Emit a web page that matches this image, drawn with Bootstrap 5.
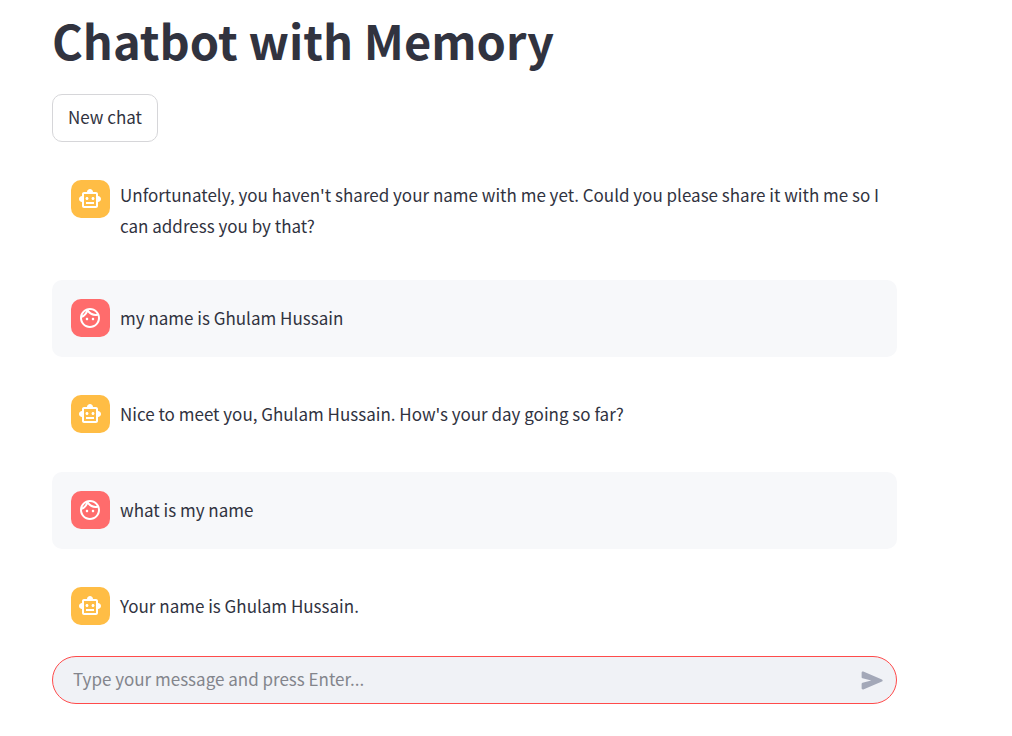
<!DOCTYPE html>
<html lang="en">
<head>
<meta charset="utf-8">
<meta name="viewport" content="width=device-width, initial-scale=1">
<title>Chatbot with Memory</title>
<link href="https://cdn.jsdelivr.net/npm/bootstrap@5.3.0/dist/css/bootstrap.min.css" rel="stylesheet">
<style>
  body { font-family: "Noto Sans CJK SC", "Noto Sans", sans-serif; font-size: 17px; line-height: 31px; color: #31333f; }
  .chat-page { padding: 9px 115px 32px 52px; }
  .chat-title { margin-bottom: 23px; font-size: 47px; line-height: 62px; color: #31333f; }
  .btn-new { --bs-btn-font-size: 17px; --bs-btn-line-height: 30px; --bs-btn-padding-x: 15px;
    --bs-btn-color: #31333f; --bs-btn-border-color: #d6d6d9; --bs-btn-border-radius: 10px; --bs-btn-bg: #fff;
    --bs-btn-hover-color: #ff4b4b; --bs-btn-hover-border-color: #ff4b4b; padding-top: 7px; padding-bottom: 9px; }
  .chat-log { gap: 19px; margin-top: 19px; }
  .message { gap: 10px; min-height: 77px; padding: 18px 9px 20px 19px; border-radius: 10px; }
  .message.user { background: #f7f8fa; }
  .avatar { width: 39px; height: 38px; margin-top: 1px; padding-right: 1px; border-radius: 10px; background: #ffbd45; color: #fff; }
  .user .avatar { background: #ff6c6c; }
  .composer { height: 48px; margin-top: 11px; padding: 0 9px 0 20px; border: 1px solid #ff4b4b; border-radius: 24px; background: #f0f2f6; }
  .composer .form-control { padding: 0 0 3px; font-size: 17px; line-height: 28px; color: #31333f; }
  .composer .form-control::placeholder { color: #83858c; opacity: 1; }
  .send { color: #a3a8b8; }
</style>
</head>
<body>
<svg class="d-none" aria-hidden="true">
  <symbol id="robot" viewBox="0 0 24 24"><path d="M20 9V7c0-1.1-.9-2-2-2h-3c0-1.66-1.34-3-3-3S9 3.34 9 5H6c-1.1 0-2 .9-2 2v2c-1.66 0-3 1.34-3 3s1.34 3 3 3v4c0 1.1.9 2 2 2h12c1.1 0 2-.9 2-2v-4c1.66 0 3-1.34 3-3s-1.34-3-3-3zm-2 10H6V7h12v12zM9 13c-.83 0-1.5-.67-1.5-1.5S8.17 10 9 10s1.5.67 1.5 1.5S9.83 13 9 13zm7.5-1.5c0 .83-.67 1.5-1.5 1.5s-1.5-.67-1.5-1.5.67-1.5 1.5-1.5 1.5.67 1.5 1.5zM8 15h8v2H8v-2z"/></symbol>
  <symbol id="face" viewBox="0 0 24 24"><path d="M10.25 13c0 .69-.56 1.25-1.25 1.25S7.75 13.69 7.75 13s.56-1.25 1.25-1.25 1.25.56 1.25 1.25zM15 11.75c-.69 0-1.25.56-1.25 1.25s.56 1.25 1.25 1.25 1.25-.56 1.25-1.25-.56-1.25-1.25-1.25zm7 .25c0 5.52-4.48 10-10 10S2 17.52 2 12 6.48 2 12 2s10 4.48 10 10zM10.66 4.12C12.06 6.44 14.6 8 17.5 8c.46 0 .91-.05 1.34-.12C17.44 5.56 14.9 4 12 4c-.46 0-.91.05-1.34.12zM4.42 9.47c1.71-.97 3.03-2.55 3.66-4.44C6.37 6 5.05 7.58 4.42 9.47zM20 12c0-.78-.12-1.53-.33-2.24-.7.15-1.42.24-2.17.24-3.13 0-5.92-1.44-7.76-3.69C8.69 8.87 6.6 10.88 4 11.86c.01.04 0 .09 0 .14 0 4.41 3.59 8 8 8s8-3.59 8-8z"/></symbol>
</svg>
<main class="chat-page">
  <h1 class="chat-title fw-bold">Chatbot with Memory</h1>
  <button type="button" class="btn btn-new">New chat</button>
  <div class="chat-log d-flex flex-column">
    <div class="message d-flex">
      <div class="avatar d-flex align-items-center justify-content-center flex-shrink-0"><svg width="24" height="24" fill="currentColor" aria-hidden="true"><use href="#robot"/></svg></div>
      <p class="my-auto">Unfortunately, you haven't shared your name with me yet. Could you please share it with me so I can address you by that?</p>
    </div>
    <div class="message user d-flex">
      <div class="avatar d-flex align-items-center justify-content-center flex-shrink-0"><svg width="24" height="24" fill="currentColor" aria-hidden="true"><use href="#face"/></svg></div>
      <p class="my-auto">my name is Ghulam Hussain</p>
    </div>
    <div class="message d-flex">
      <div class="avatar d-flex align-items-center justify-content-center flex-shrink-0"><svg width="24" height="24" fill="currentColor" aria-hidden="true"><use href="#robot"/></svg></div>
      <p class="my-auto">Nice to meet you, Ghulam Hussain. How's your day going so far?</p>
    </div>
    <div class="message user d-flex">
      <div class="avatar d-flex align-items-center justify-content-center flex-shrink-0"><svg width="24" height="24" fill="currentColor" aria-hidden="true"><use href="#face"/></svg></div>
      <p class="my-auto">what is my name</p>
    </div>
    <div class="message d-flex">
      <div class="avatar d-flex align-items-center justify-content-center flex-shrink-0"><svg width="24" height="24" fill="currentColor" aria-hidden="true"><use href="#robot"/></svg></div>
      <p class="my-auto">Your name is Ghulam Hussain.</p>
    </div>
  </div>
  <form class="composer d-flex align-items-center">
    <input type="text" class="form-control border-0 bg-transparent shadow-none" aria-label="Message" placeholder="Type your message and press Enter...">
    <button type="button" class="send btn border-0 p-0 d-flex" aria-label="Send"><svg width="29" height="29" viewBox="0 0 24 24" fill="currentColor" aria-hidden="true"><path d="M3 5.51v3.71c0 .46.31.86.76.97L11 12l-7.24 1.81c-.45.11-.76.51-.76.97v3.71c0 .72.73 1.2 1.39.92l15.42-6.49c.82-.34.82-1.5 0-1.84L4.39 4.59C3.73 4.31 3 4.8 3 5.51z"/></svg></button>
  </form>
</main>
<script src="https://cdn.jsdelivr.net/npm/bootstrap@5.3.0/dist/js/bootstrap.bundle.min.js"></script>
</body>
</html>
